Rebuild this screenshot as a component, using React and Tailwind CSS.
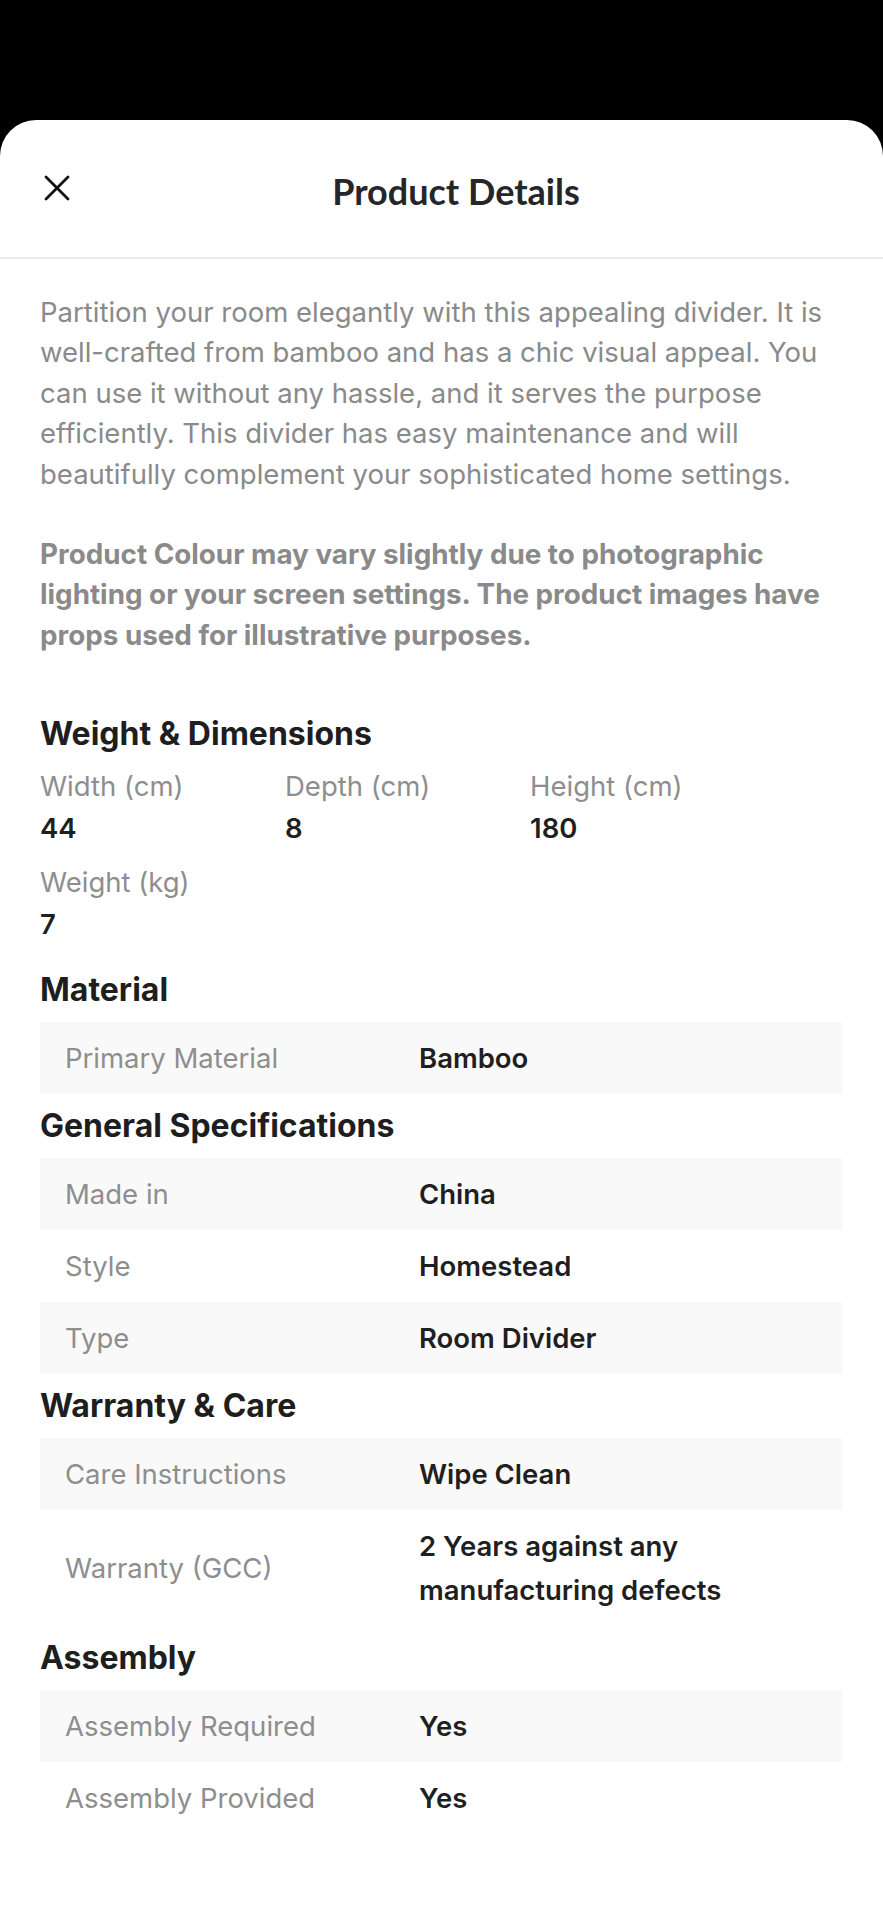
import React from "react";

const Row = ({ label, value, shaded }) => (
  <div className={`flex items-center px-[25px] py-[14px] ${shaded ? "bg-[#f9f9f9]" : "bg-white"}`}>
    <div className="w-[354px] shrink-0 text-[27.5px] leading-[44px] text-[#8e8e8e]">{label}</div>
    <div className="flex-1 text-[27.5px] leading-[44px] font-semibold text-[#1f1f1f]">{value}</div>
  </div>
);

const Heading = ({ children }) => (
  <h2 className="text-[32px] leading-[64px] font-bold text-[#1e1e1e]">{children}</h2>
);

const Dim = ({ label, value }) => (
  <div className="w-[245px] mb-[12px]">
    <div className="text-[27.5px] leading-[40px] text-[#8e8e8e]">{label}</div>
    <div className="text-[27.5px] leading-[44px] font-semibold text-[#1f1f1f]">{value}</div>
  </div>
);

export default function App() {
  return (
    <div className="w-[883px] min-h-[1920px] bg-black pt-[120px]" style={{ fontFamily: "Inter, 'Noto Sans', sans-serif" }}>
      <div className="bg-white rounded-t-[36px] min-h-[1800px]">
        <div className="flex items-center pl-[44px] pr-[41px] pt-[41px] pb-[42px] border-b-2 border-[#ebebeb]">
          <button className="w-[26px] h-[26px] shrink-0 flex items-center justify-center">
            <svg width="26" height="26" viewBox="0 0 26 26" fill="none" stroke="#111" strokeWidth="2.8" strokeLinecap="round">
              <path d="M2 2 L24 24 M24 2 L2 24" />
            </svg>
          </button>
          <h1
            className="flex-1 text-center text-[36px] leading-[48px] font-bold text-[#26262a] mt-[6px]"
            style={{ fontFamily: "Lato, 'Noto Sans', sans-serif" }}
          >
            Product Details
          </h1>
        </div>

        <div className="px-[40px] pt-[33px] pb-[47px]">
          <p className="text-[27.5px] leading-[40.4px] text-[#8a8a8a]">
            Partition your room elegantly with this appealing divider. It is well-crafted from bamboo and has a chic visual appeal. You can use it without any hassle, and it serves the purpose efficiently. This divider has easy maintenance and will beautifully complement your sophisticated home settings.
          </p>
          <p className="mt-[40px] text-[27.8px] leading-[40.4px] font-bold text-[#8a8a8a]">
            Product Colour may vary slightly due to photographic lighting or your screen settings. The product images have props used for illustrative purposes.
          </p>
        </div>

        <div className="px-[40px] pb-[87px]">
          <Heading>Weight &amp; Dimensions</Heading>
          <div className="flex flex-wrap">
            <Dim label="Width (cm)" value="44" />
            <Dim label="Depth (cm)" value="8" />
            <Dim label="Height (cm)" value="180" />
            <Dim label="Weight (kg)" value="7" />
          </div>

          <Heading>Material</Heading>
          <Row label="Primary Material" value="Bamboo" shaded />

          <Heading>General Specifications</Heading>
          <Row label="Made in" value="China" shaded />
          <Row label="Style" value="Homestead" />
          <Row label="Type" value="Room Divider" shaded />

          <Heading>Warranty &amp; Care</Heading>
          <Row label="Care Instructions" value="Wipe Clean" shaded />
          <Row label="Warranty (GCC)" value="2 Years against any manufacturing defects" />

          <Heading>Assembly</Heading>
          <Row label="Assembly Required" value="Yes" shaded />
          <Row label="Assembly Provided" value="Yes" />
        </div>
      </div>
    </div>
  );
}
